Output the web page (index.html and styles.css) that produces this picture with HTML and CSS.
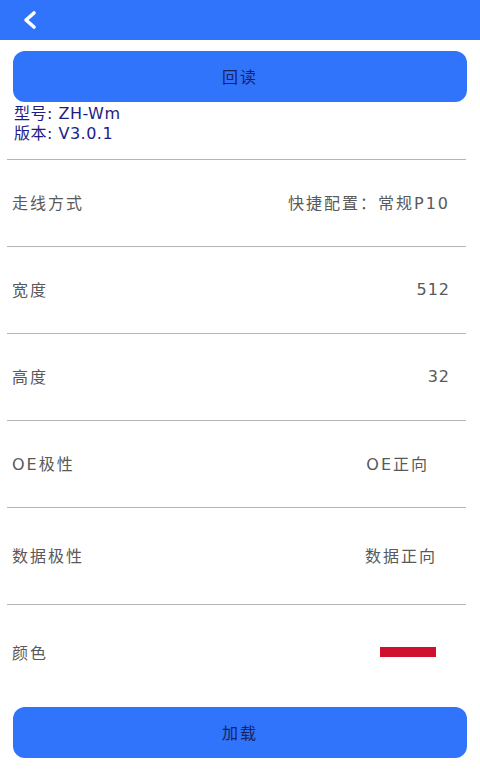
FILE: index.html
```html
<!DOCTYPE html>
<html lang="zh">
<head>
<meta charset="utf-8">
<link rel="stylesheet" href="styles.css">
</head>
<body>
<header class="topbar">
  <svg class="back" width="20" height="20" viewBox="0 0 20 20"><path d="M14 3 L6 10 L14 17" fill="none" stroke="#fff" stroke-width="3.6" stroke-linecap="round" stroke-linejoin="round"/></svg>
</header>
<main class="content">
  <button class="btn">回读</button>
  <div class="info">
    <div>型号: ZH-Wm</div>
    <div>版本: V3.0.1</div>
  </div>
  <div class="list">
    <div class="row r1"><span class="label">走线方式</span><span class="value v-wide">快捷配置：常规P10</span></div>
    <div class="row r1"><span class="label">宽度</span><span class="value v-num">512</span></div>
    <div class="row r1"><span class="label">高度</span><span class="value v-num">32</span></div>
    <div class="row r1"><span class="label">OE极性</span><span class="value v-oe">OE正向</span></div>
    <div class="row r2"><span class="label">数据极性</span><span class="value v-data">数据正向</span></div>
    <div class="row r3"><span class="label">颜色</span><span class="swatch"></span></div>
  </div>
  <button class="btn btn-bottom">加载</button>
</main>
</body>
</html>
```
FILE: styles.css
```css
* { box-sizing: border-box; }
body {
  margin: 0;
  background: #fff;
  font-family: "DejaVu Sans", "Noto Sans CJK SC", sans-serif;
}
.topbar {
  height: 40px;
  background: #2f74fa;
  display: flex;
  align-items: center;
  padding-left: 20px;
}
.back { display: block; }
.content {
  padding: 0 13px 0 7px;
}
.btn {
  display: block;
  width: 454px;
  margin: 11px 0 0 6px;
  height: 51px;
  border: none;
  border-radius: 12px;
  background: #2f74fa;
  color: #17235e;
  font-family: "Noto Sans CJK SC", sans-serif;
  font-size: 16px;
  letter-spacing: 2px;
  padding: 0 0 2px;
}
.btn-bottom { margin-top: 6px; }
.info {
  padding: 2px 0 0 7px;
  color: #1d1d86;
  font-size: 16px;
  line-height: 20px;
  letter-spacing: 0.5px;
  margin-bottom: 15px;
}
.list {
  border-top: 1px solid #b4b4b4;
  width: 459px;
}
.row {
  display: flex;
  align-items: center;
  justify-content: space-between;
  border-bottom: 1px solid #b4b4b4;
  padding: 0 0 2px 5px;
  color: #595959;
  font-size: 16px;
  letter-spacing: 2px;
}
.r1 { height: 87px; }
.r2 { height: 97px; }
.r3 { height: 96px; border-bottom: none; }
.v-wide { padding-right: 16px; }
.v-num { padding-right: 16px; letter-spacing: 1px; }
.v-oe { padding-right: 37px; }
.v-data { padding-right: 29px; }
.swatch {
  width: 56px;
  height: 10px;
  background: #d0102f;
  margin-right: 30px;
}
```
